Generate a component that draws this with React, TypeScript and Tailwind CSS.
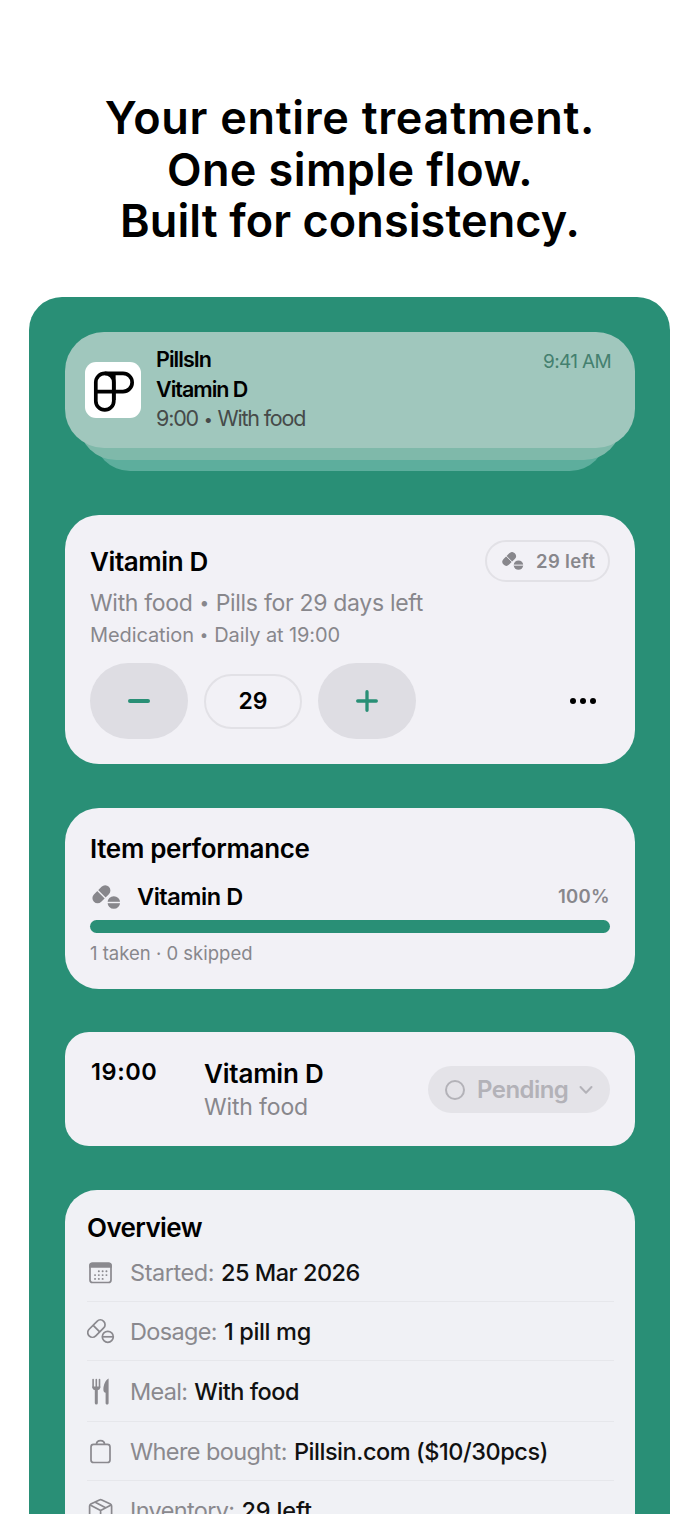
import type { ReactNode } from "react";

function PillsIcon({ className, bg }: { className: string; bg: string }) {
  return (
    <svg viewBox="0 0 29 24" className={className} fill="none">
      <path d="M5.6 13.1L13.2 5.5" stroke="#88878c" strokeWidth="10.4" strokeLinecap="round" />
      <path d="M4.4 4.3L14.4 14.3" stroke={bg} strokeWidth="1.3" />
      <circle cx="21.8" cy="17.5" r="7.6" fill={bg} />
      <circle cx="21.8" cy="17.5" r="6.3" fill="#88878c" />
      <path d="M15 17.5H29" stroke={bg} strokeWidth="1.4" />
    </svg>
  );
}

function LogoIcon() {
  return (
    <svg viewBox="0 0 56 56" className="size-14" fill="none" stroke="#000" strokeWidth="3.7">
      <rect x="10.8" y="11.3" width="18" height="36.6" rx="9" />
      <path d="M19.8 11.3H38a9.1 9.1 0 0 1 0 18.3H10.8M28.8 11.3V38" />
    </svg>
  );
}

function CalendarIcon() {
  return (
    <svg viewBox="0 0 28 28" className="size-7" fill="none">
      <rect x="3" y="4.3" width="21" height="19.2" rx="2.6" stroke="#8a898e" strokeWidth="1.7" />
      <path d="M2.2 8.8V6.5a3 3 0 0 1 3-3h16.6a3 3 0 0 1 3 3V8.8z" fill="#8a898e" />
      <path
        d="M11.8 12.3h.1M15.6 12.3h.1M19.4 12.3h.1M8 16.1h.1M11.8 16.1h.1M15.6 16.1h.1M19.4 16.1h.1M8 19.9h.1M11.8 19.9h.1M15.6 19.9h.1"
        stroke="#8a898e"
        strokeWidth="1.9"
        strokeLinecap="round"
      />
    </svg>
  );
}

function PillsOutlineIcon() {
  return (
    <svg viewBox="0 0 28 28" className="size-7" fill="none" stroke="#8a898e" strokeWidth="1.7">
      <rect x="-10.3" y="-4.7" width="20.6" height="9.4" rx="4.7" transform="translate(9.4 10.6) rotate(-45)" />
      <path d="M6.2 7.3L12.7 13.9" />
      <circle cx="20.8" cy="18.8" r="7" fill="#f0f1f5" stroke="none" />
      <circle cx="20.8" cy="18.8" r="5.5" />
      <path d="M15.3 18.8H26.300" />
    </svg>
  );
}

function MealIcon() {
  return (
    <svg viewBox="0 0 28 28" className="size-7" fill="none" stroke="#8a898e" strokeLinecap="round">
      <path d="M6.1 1.5V9.5M9.3 1.5V9.5M12.5 1.5V9.5" strokeWidth="1.6" />
      <path d="M5.3 8.5c0 2.800 1.200 3.800 4 3.800s4-1 4-3.800z" fill="#8a898e" stroke="none" />
      <path d="M9.3 11V25" strokeWidth="3" />
      <path d="M21.6 .6c-3.3 1.6-5.2 6.600-5.200 11 0 2.200.8 3 2.200 3.100V24.900c0 2 3 2 3 0z" fill="#8a898e" stroke="none" />
    </svg>
  );
}

function BagIcon() {
  return (
    <svg viewBox="0 0 28 28" className="size-7" fill="none" stroke="#8a898e" strokeWidth="1.7">
      <rect x="4" y="6.3" width="19" height="18.2" rx="2.6" />
      <path d="M9.500 6.300c0-5 8-5 8 0" />
    </svg>
  );
}

function BoxIcon() {
  return (
    <svg viewBox="0 0 28 28" className="size-7" fill="none" stroke="#8a898e" strokeWidth="1.7" strokeLinejoin="round">
      <path d="M12.4 2.9q1.2-.6 2.4 0l8.600 4.200q1.200.7 1.200 2v9.700q0 1.300-1.200 2l-9.800 5.200-9.800-5.200q-1.200-.7-1.200-2V9.100q0-1.300 1.200-2z" />
      <path d="M3.200 8.100l10.400 5.400L24.100 8.100M13.600 13.500V25.500M8.300 5.300l10.300 5.500" />
    </svg>
  );
}

function Dot() {
  return <span className="inline-block w-[0.62em] text-center align-[0.11em] text-[0.75em] leading-none">•</span>;
}

function Card({ className, children }: { className: string; children: ReactNode }) {
  return <section className={`w-[570px] ${className}`}>{children}</section>;
}

const rows = [
  { icon: <CalendarIcon />, label: "Started:", value: "25 Mar 2026", row: "h-[58px]", labelFit: "tracking-[-0.45px]", valueFit: "tracking-[-0.5px]" },
  { icon: <PillsOutlineIcon />, label: "Dosage:", value: "1 pill mg", row: "h-[59px] pt-[2px]", labelFit: "tracking-[-0.65px]", valueFit: "tracking-[-0.35px]" },
  { icon: <MealIcon />, label: "Meal:", value: "With food", row: "h-[61px] pt-[2px]", labelFit: "tracking-[-0.7px]", valueFit: "tracking-[-0.5px]" },
  { icon: <BagIcon />, label: "Where bought:", value: "Pillsin.com ($10/30pcs)", row: "h-[59px] pt-[2px]", labelFit: "tracking-[-0.6px]", valueFit: "tracking-[-0.45px]" },
  { icon: <BoxIcon />, label: "Inventory:", value: "29 left", row: "h-[60px] pt-[1px]", labelFit: "tracking-[-0.65px]", valueFit: "tracking-[-0.15px]" },
];

export default function App() {
  return (
    <div className="h-[1514px] w-[700px] overflow-hidden bg-white font-['Inter',sans-serif] whitespace-nowrap text-black">
      {/* Headline */}
      <h1 className="flex h-[297px] flex-col items-center pt-[92px] text-[45px] leading-[51.500px] font-semibold">
        <span className="tracking-[0.7px]">Your entire treatment.</span>
        <span className="tracking-[0.4px]">One simple flow.</span>
        <span className="tracking-[0.08px]">Built for consistency.</span>
      </h1>

      <main className="ml-[29px] flex h-[1300px] w-[641px] flex-col items-center rounded-t-[33px] bg-[#298f76] pt-[35px] pl-[1px]">
        {/* Notification stack */}
        <div className="relative h-[139px] w-[570px]">
          <div className="absolute inset-x-[29px] bottom-0 h-20 rounded-[36px] bg-[#5dae9d]" />
          <div className="absolute inset-x-[14px] bottom-[11px] h-20 rounded-[37px] bg-[#7fb9aa]" />
          <div className="relative flex h-[116px] rounded-[39px] bg-[#a0c7bd] pt-[12px] pr-[24px] pl-[20px]">
            <div className="mt-[18px] size-14 overflow-hidden rounded-[11px] bg-white">
              <LogoIcon />
            </div>
            <div className="mt-px ml-[15px] flex-1 text-[21.500px] leading-[29.700px] font-semibold">
              <p className="tracking-[-0.95px]">PillsIn</p>
              <p className="tracking-[-1px]">Vitamin D</p>
              <p className="font-normal tracking-[-1.200px] text-[#464a49]">
                9:00 <Dot /> With food
              </p>
            </div>
            <p className="mt-[3px] text-[19px] leading-[30px] tracking-[-0.65px] text-[#44806f]">9:41 AM</p>
          </div>
        </div>

        {/* Stock card */}
        <Card className="mt-[44px] h-[249px] rounded-[34px] bg-[#f2f1f6] px-[25px] pt-[25px]">
          <div className="flex h-[42px] items-center justify-between">
            <h2 className="pt-[2px] text-[26px] leading-[40px] font-semibold tracking-[-0.4px]">Vitamin D</h2>
            <div className="flex h-[42px] w-[125px] items-center rounded-full border-2 border-[#e2e1e6] pl-[15px]">
              <PillsIcon className="h-[18px] w-[22px]" bg="#f2f1f6" />
              <span className="ml-[12px] pt-px text-[18.500px] font-semibold tracking-[0.35px] text-[#88878c]">29 left</span>
            </div>
          </div>
          <p className="mt-[6px] text-[23px] leading-[30px] tracking-[-0.3px] text-[#88878c]">
            With food <Dot /> Pills for 29 days left
          </p>
          <p className="mt-[2px] text-[20px] leading-[30px] tracking-[-0.1px] text-[#88878c]">
            Medication <Dot /> Daily at 19:00
          </p>
          <div className="mt-[13px] flex h-[76px] items-center gap-4">
            <div className="grid h-[76px] w-[98px] place-items-center rounded-full bg-[#dedde3]">
              <div className="h-[3.500px] w-[22px] rounded-full bg-[#298f76]" />
            </div>
            <div className="grid h-[55px] w-[98px] place-items-center rounded-full border-2 border-[#e2e1e6] text-[23px] font-semibold">
              29
            </div>
            <div className="grid h-[76px] w-[98px] place-items-center rounded-full bg-[#dedde3]">
              <svg viewBox="0 0 22 22" className="size-[22px]" stroke="#298f76" strokeWidth="3.3" strokeLinecap="round">
                <path d="M11 1.7V20.3M1.7 11H20.3" />
              </svg>
            </div>
            <div className="mr-[14px] ml-auto flex gap-[4px]">
              <i className="size-[6px] rounded-full bg-black" />
              <i className="size-[6px] rounded-full bg-black" />
              <i className="size-[6px] rounded-full bg-black" />
            </div>
          </div>
        </Card>

        {/* Performance card */}
        <Card className="mt-[44px] h-[181px] rounded-[34px] bg-[#f2f1f6] px-[25px] pt-[25px]">
          <h2 className="text-[26px] leading-[32px] font-semibold tracking-[-0.33px]">Item performance</h2>
          <div className="mt-[16px] flex h-[32px] items-center">
            <PillsIcon className="ml-[2px] h-6 w-[29px]" bg="#f2f1f6" />
            <span className="ml-[16px] text-[23.500px] font-semibold tracking-[-0.45px]">Vitamin D</span>
            <span className="ml-auto text-[18.500px] font-semibold tracking-[0.3px] text-[#88878c]">100%</span>
          </div>
          <div className="mt-[7px] h-[13px] rounded-full bg-[#298f76]" />
          <p className="mt-[5px] text-[18.500px] leading-[30px] text-[#88878c]">1 taken · 0 skipped</p>
        </Card>

        {/* Schedule card */}
        <Card className="mt-[43px] flex h-[114px] rounded-[24px] bg-[#f2f1f6] pr-[25px] pl-[26px]">
          <p className="mt-[25px] w-[113px] text-[23.500px] leading-[30px] font-semibold tracking-[0.6px]">19:00</p>
          <div className="mt-[27px] flex-1">
            <p className="text-[26px] leading-[30px] font-semibold tracking-[-0.2px]">Vitamin D</p>
            <p className="mt-[3px] text-[23px] leading-[30px] tracking-[-0.15px] text-[#88878c]">With food</p>
          </div>
          <div className="mt-[34px] flex h-[47px] w-[182px] items-center rounded-full bg-[#e4e3e8] pl-[17px] text-[#b3b2b8]">
            <div className="size-[20px] rounded-full border-2 border-[#b3b2b8]" />
            <span className="ml-[12px] text-[24px] font-semibold tracking-[-0.55px]">Pending</span>
            <svg viewBox="0 0 14 10" className="ml-[11px] h-[10px] w-[14px]" fill="none" stroke="currentColor" strokeWidth="2" strokeLinecap="round" strokeLinejoin="round">
              <path d="M1.5 2L7 7.7L12.5 2" />
            </svg>
          </div>
        </Card>

        {/* Overview card */}
        <Card className="mt-[44px] h-[400px] rounded-[32px] bg-[#f0f1f5] pt-[22px] pr-[21px] pl-[22px]">
          <h2 className="text-[26px] leading-[32px] font-semibold tracking-[-0.6px]">Overview</h2>
          <div className="flex flex-col">
            {rows.map((r) => (
              <div key={r.label} className={`flex items-center border-b border-[#e6e7eb] ${r.row}`}>
                {r.icon}
                <span className={`ml-[15px] text-[23.500px] text-[#8a898e] ${r.labelFit}`}>{r.label}</span>
                <span className={`ml-[7px] text-[23.500px] font-medium text-[#111] ${r.valueFit}`}>{r.value}</span>
              </div>
            ))}
          </div>
        </Card>
      </main>
    </div>
  );
}
